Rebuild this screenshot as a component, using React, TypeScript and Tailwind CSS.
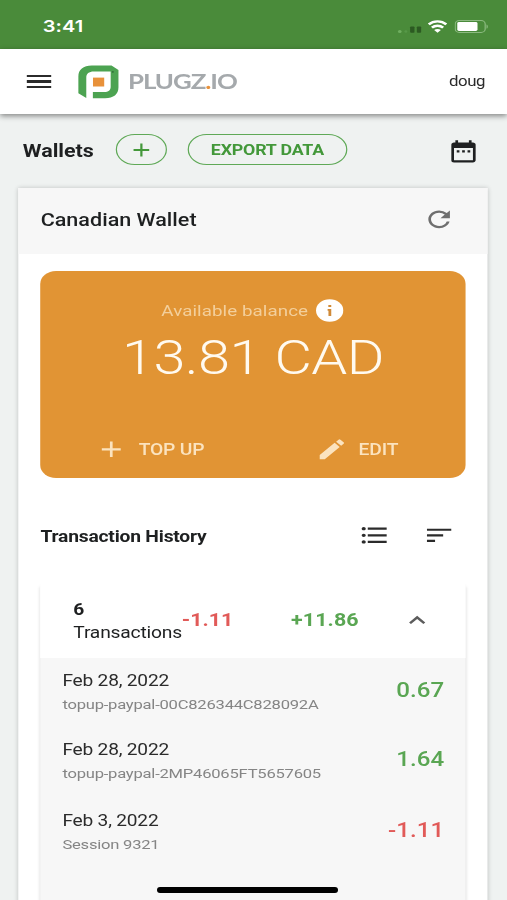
import React from 'react';
import { MdAdd, MdDateRange, MdEdit, MdExpandLess, MdFormatListBulleted, MdRefresh, MdSort } from 'react-icons/md';

interface Transaction {
  date: string;
  detail: string;
  amount: string;
  rowClass: string;
}

const transactions: Transaction[] = [
  { date: 'Feb 28, 2022', detail: 'topup-paypal-00C826344C828092A', amount: '0.67', rowClass: 'h-[69px]' },
  { date: 'Feb 28, 2022', detail: 'topup-paypal-2MP46065FT5657605', amount: '1.64', rowClass: 'h-[71.5px]' },
  { date: 'Feb 3, 2022', detail: 'Session 9321', amount: '-1.11', rowClass: 'h-[102px]' },
];

const StatusBar: React.FC = () => (
  <div className="h-[49px] shrink-0 bg-[#4a8b3a] flex items-center justify-between pl-[35px] pr-[15px] pt-[4px] text-white">
    <span className="font-['Inter'] text-[16.4px] font-semibold tracking-[0.1px]">3:41</span>
    <div className="flex items-center">
      <svg width="20" height="14" viewBox="0 0 20 14" className="mr-[5px] mt-[2px]">
        <circle cx="2" cy="10.5" r="1.5" fill="#6fae60" />
        <circle cx="7" cy="10.5" r="1.2" fill="#579848" />
        <rect x="10.5" y="5.5" width="3.6" height="6.3" rx="0.8" fill="#2c5a22" />
        <rect x="16" y="5.5" width="3.6" height="6.3" rx="0.8" fill="#2c5a22" />
      </svg>
      <svg width="16" height="13" viewBox="0 0 16 13" className="mr-[6px]" fill="none" stroke="white" strokeWidth="2.3">
        <path d="M0.8 4.4C4.8 0.4 11.2 0.4 15.2 4.4" />
        <path d="M3.4 7.6C6 5.1 10 5.1 12.6 7.6" />
        <path d="M8 12.8L5.2 10C6.8 8.5 9.2 8.5 10.8 10Z" fill="white" stroke="none" />
      </svg>
      <svg width="28" height="13" viewBox="0 0 28 13">
        <rect x="0.5" y="0.6" width="24.6" height="11.8" rx="3.4" fill="none" stroke="#8cba80" />
        <rect x="2.2" y="2" width="16.6" height="9" rx="1.4" fill="white" />
        <path d="M26.2 4.4C27.6 4.9 27.6 8.1 26.2 8.6Z" fill="#8cba80" />
      </svg>
    </div>
  </div>
);

const Logo: React.FC = () => (
  <div className="flex items-center">
    <svg width="34" height="34" viewBox="0 0 34 34">
      <path d="M6.8 33L0.3 28.2V11.5C0.3 4.5 4.3 0.5 11.3 0.5H27.5L33.2 5V22.3C33.2 29.3 29.2 33.3 22.2 33.3H12.2V27H21.5C25 27 26.8 25.2 26.8 21.7V6.5H13C8.8 6.5 6.8 8.6 6.8 12.8Z" fill="#4ca351" />
      <path d="M27.6 7L29 5.9V7.8Z" fill="#1d4a26" />
      <rect x="12.3" y="12.6" width="9.2" height="8.9" fill="#e8913a" />
    </svg>
    <span className="ml-[7.5px] font-['Lato'] text-[21.2px] leading-none font-bold text-[#a5a9ac] tracking-[-0.85px]">
      PLUGZ<span className="text-[#e8913a]">.</span>IO
    </span>
  </div>
);

const AppHeader: React.FC = () => (
  <div className="relative z-10 h-[65px] shrink-0 bg-white shadow-[0_2px_5px_rgba(0,0,0,0.45)] flex items-center pl-[21.5px] pr-[18px]">
    <div className="flex flex-col gap-[3.3px] w-[20.5px] mr-[21.5px]">
      <div className="h-[2.3px] bg-[#2b2b2b]" />
      <div className="h-[2.3px] bg-[#2b2b2b]" />
      <div className="h-[2.3px] bg-[#2b2b2b]" />
    </div>
    <Logo />
    <span className="ml-auto text-[13.8px] text-[#2b2b2b] tracking-[-0.35px]">doug</span>
  </div>
);

const WalletBar: React.FC = () => (
  <div className="h-[74px] shrink-0 flex items-center pl-[18.7px] pr-[22.3px]">
    <h1 className="w-[76px] pt-[1px] text-[17.6px] font-bold text-[#1e2021]">Wallets</h1>
    <button className="-mt-[3px] w-[42.5px] h-[31px] rounded-full border border-[#5fa957] flex items-center justify-center text-[#43983a]">
      <MdAdd size={22} />
    </button>
    <button className="-mt-[3px] ml-[17px] w-[130.5px] h-[31px] pt-[2px] rounded-full border border-[#5fa957] text-[14.6px] font-bold text-[#43983a] tracking-[-0.15px] whitespace-nowrap">
      EXPORT DATA
    </button>
    <MdDateRange size={26.6} className="ml-auto text-[#1e2021]" />
  </div>
);

const BalanceCard: React.FC = () => (
  <div className="h-[206.5px] rounded-[13px] bg-[#e19434] flex flex-col items-center pt-[28px]">
    <div className="flex items-center h-[23px] -ml-[1px]">
      <span className="pt-[2px] text-[15.4px] text-[#f3cf9b] tracking-[0.06px] mr-[6px]">Available balance</span>
      <svg width="23" height="23" viewBox="0 0 23 23">
        <circle cx="11.5" cy="11.5" r="11.2" fill="white" />
        <path d="M10.4 6H12.8V8H10.4ZM9.8 10H12.8V17H10.5V11.8H9.8Z" fill="#d08a38" />
      </svg>
    </div>
    <div className="h-[72px] leading-[73px] text-[47.3px] font-light text-[#fffaf0] tracking-[-0.45px] whitespace-nowrap">13.81 CAD</div>
    <div className="w-full mt-[42px] h-[26px] grid grid-cols-2 text-[15.8px] font-medium text-[#fbe3bf]">
      <div className="flex items-center pl-[44.5px]">
        <MdAdd size={26.6} />
        <span className="ml-[9.5px] pt-[1px] tracking-[-0.15px]">TOP UP</span>
      </div>
      <div className="flex items-center pl-[51.3px]">
        <MdEdit size={26.6} />
        <span className="ml-[8.7px] pt-[1px] tracking-[-0.1px]">EDIT</span>
      </div>
    </div>
  </div>
);

const TransactionRow: React.FC<{ item: Transaction }> = ({ item }) => (
  <div className={`flex justify-between pl-[18px] pr-[17.6px] ${item.rowClass}`}>
    <div className="flex flex-col">
      <span className="text-[15.7px] leading-[24px] text-[#2b2b2b] tracking-[-0.16px]">{item.date}</span>
      <span className="text-[13.6px] leading-[23px] text-[#858585] tracking-[-0.18px]">{item.detail}</span>
    </div>
    <span
      className={`mt-[10px] text-[19.8px] leading-[24px] font-medium ${
        item.amount.startsWith('-') ? 'text-[#e15a58]' : 'text-[#5aa653]'
      }`}
    >
      {item.amount}
    </span>
  </div>
);

const TransactionHistory: React.FC = () => (
  <div>
    <div className="h-[106px] flex items-center pt-[10px] pr-[8px]">
      <h2 className="pt-[2px] text-[15.8px] font-bold text-[#1e2021] tracking-[-0.17px]">Transaction History</h2>
      <MdFormatListBulleted size={26.6} className="ml-auto mr-[27px] text-[#2b2b2b]" />
      <MdSort size={26.6} className="text-[#2b2b2b]" />
    </div>
    <div className="shadow-[0_3px_3px_rgba(0,0,0,0.15)] bg-[#f7f7f7]">
      <div className="h-[74px] bg-white flex items-center pl-[27px] text-[#1e2021]">
        <div className="w-[89px] text-[15.8px] leading-[23px]">
          <div className="font-bold">6</div>
          <div className="tracking-[-0.17px] whitespace-nowrap">Transactions</div>
        </div>
        <span className="w-[89.5px] text-[17.6px] font-bold text-[#e15a58]">-1.11</span>
        <span className="w-[90.5px] text-[17.6px] font-bold text-[#5aa653] tracking-[0.1px]">+11.86</span>
        <MdExpandLess size={26.6} className="text-[#5c5c5c]" />
      </div>
      <div className="pt-[11px]">
        {transactions.map((item) => (
          <TransactionRow key={item.detail} item={item} />
        ))}
      </div>
    </div>
  </div>
);

const App: React.FC = () => {
  return (
    <div className="relative w-[507px] h-[900px] overflow-hidden bg-[#eff2f1]">
      {/* 416px wide phone layout, stretched to the full window width */}
      <div className="w-[416px] h-[900px] origin-top-left scale-x-[1.21875] flex flex-col overflow-hidden font-['Roboto',sans-serif]">
        <StatusBar />
        <AppHeader />
        <WalletBar />
        <div className="ml-[15.2px] mr-[16px] flex-1 bg-white shadow-[0_0_4px_rgba(0,0,0,0.2)]">
          <div className="h-[66px] bg-[#f7f7f7] flex items-center justify-between pl-[18.2px] pr-[26.2px]">
            <h2 className="text-[17.7px] font-medium text-[#1e2021] -mt-[1px]">Canadian Wallet</h2>
            <MdRefresh size={26.6} className="text-[#6f6f6f] -mt-[4px]" />
          </div>
          <div className="px-[18px] pt-[17px]">
            <BalanceCard />
            <TransactionHistory />
          </div>
        </div>
      </div>
      <div className="absolute left-[157px] top-[887px] w-[181px] h-[6px] rounded-full bg-black" />
    </div>
  );
};

export default App;
